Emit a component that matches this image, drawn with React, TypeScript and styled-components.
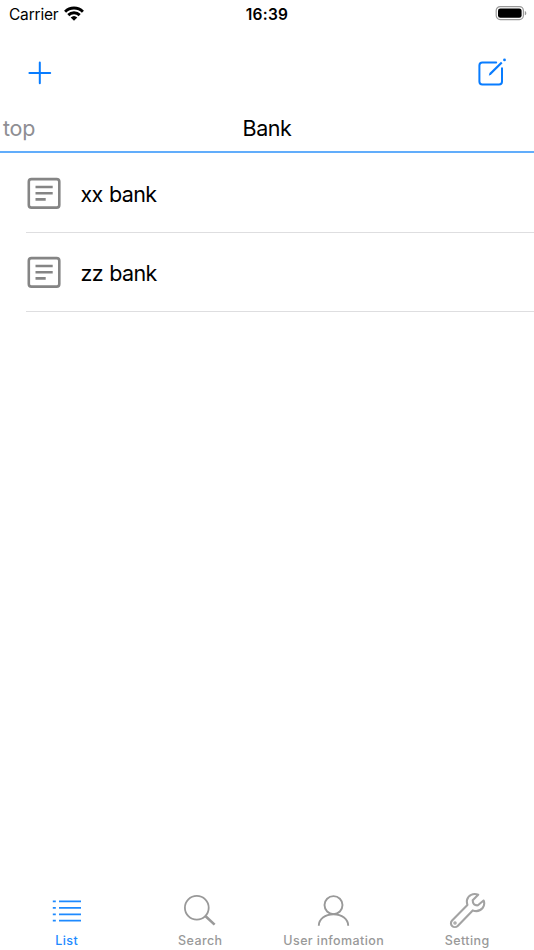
import React from "react";
import styled, { createGlobalStyle } from "styled-components";

const GlobalStyle = createGlobalStyle`
  * { box-sizing: border-box; }
  body { margin: 0; background: #fff; }
`;

const Screen = styled.div`
  width: 100%;
  height: 950px;
  display: flex;
  flex-direction: column;
  overflow: hidden;
  background: #fff;
  color: #000;
  font-family: Inter, "Liberation Sans", sans-serif;
  svg { display: block; flex: none; }
`;

const StatusBar = styled.header`
  height: 28px;
  flex: none;
  display: grid;
  grid-template-columns: 1fr auto 1fr;
  align-items: center;
  padding: 0 7px 0 9px;
`;

const Carrier = styled.div`
  display: flex;
  align-items: center;
  gap: 6px;
  padding-top: 1px;
  font-size: 15.5px;
  line-height: 20px;
  letter-spacing: -0.2px;
  svg { margin-bottom: 2px; }
`;

const Clock = styled.time`
  padding-top: 1px;
  margin-left: -2px;
  font-size: 15.5px;
  line-height: 20px;
  font-weight: 600;
  letter-spacing: 0.25px;
`;

const Battery = styled.div`
  display: flex;
  justify-content: flex-end;
  padding-bottom: 2px;
`;

const Toolbar = styled.nav`
  height: 77px;
  flex: none;
  display: flex;
  align-items: center;
  justify-content: space-between;
  padding: 12px 27px 0 26px;
`;

const IconButton = styled.button`
  padding: 0;
  border: 0;
  background: none;
  color: #087cff;
`;

const TitleBar = styled.div`
  height: 48px;
  flex: none;
  display: grid;
  grid-template-columns: 1fr auto 1fr;
  align-items: center;
  padding: 0 3px;
  border-bottom: 2px solid #61adfb;
  line-height: 28px;
`;

const Back = styled.span`
  color: #8e8e93;
  font-size: 21.5px;
  letter-spacing: -0.2px;
`;

const Title = styled.h1`
  margin: 0;
  font-size: 21.5px;
  font-weight: 400;
  letter-spacing: -0.4px;
`;

const List = styled.ul`
  flex: 1;
  margin: 0;
  padding: 1px 0 0 26px;
  list-style: none;
`;

const Row = styled.li`
  height: 79px;
  display: flex;
  align-items: center;
  gap: 18.5px;
  border-bottom: 1px solid #dedee0;
  font-size: 21.5px;
  line-height: 28px;
  letter-spacing: -0.65px;
  word-spacing: 1px;
`;

const RowLabel = styled.span`
  padding-top: 2px;
`;

const TabBar = styled.nav`
  height: 65px;
  flex: none;
  display: grid;
  grid-template-columns: repeat(4, 1fr);
`;

const Tab = styled.button<{ $active?: boolean }>`
  display: flex;
  flex-direction: column;
  align-items: center;
  padding: 5px 0 0;
  border: 0;
  background: none;
  color: ${(p) => (p.$active ? "#1e8aff" : "#999")};
  font-family: inherit;
  font-size: 12.5px;
  font-weight: 500;
  line-height: 16px;
  letter-spacing: 0.4px;
`;

const TabLabel = styled.span`
  margin-top: 3px;
  white-space: nowrap;
`;

const WifiIcon = () => (
  <svg width="20" height="16" viewBox="0 0 20 16" fill="none" stroke="#000" strokeWidth="2.9">
    <path d="M1.1 5.7a12.7 12.7 0 0 1 17.8 0M4.3 9.1a8.1 8.1 0 0 1 11.4 0" />
    <path d="M10 14.8 6.7 11.5a4.8 4.8 0 0 1 6.6 0Z" fill="#000" stroke="none" />
  </svg>
);

const BatteryIcon = () => (
  <svg width="32" height="16" viewBox="0 0 32 16">
    <rect x="1.2" y="1.6" width="27.2" height="13" rx="4" fill="none" stroke="#999" strokeWidth="1.2" />
    <rect x="3" y="3.4" width="23.6" height="9.4" rx="2.3" />
    <path d="M29.8 5.9c2 .7 2 3.7 0 4.4Z" fill="#999" />
  </svg>
);

const PlusIcon = () => (
  <svg width="28" height="28" viewBox="0 0 28 28" stroke="currentColor" strokeWidth="2">
    <path d="M13.8 3.5v20.8M3.4 13.9h20.8" strokeLinecap="round" />
  </svg>
);

const ComposeIcon = () => (
  <svg width="30" height="30" viewBox="0 0 30 30" fill="none" stroke="currentColor" strokeWidth="2" strokeLinecap="round">
    <path d="M19.2 4.6H5.4Q2.4 4.6 2.4 7.6v16q0 3 3 3H22q3 0 3-3V10.3" />
    <path d="m11.8 17.8.7-2.8L24 3.7l1.5 1.5-11.3 11.4Z" fill="currentColor" stroke="none" />
    <circle cx="27.5" cy="1.9" r="1.4" fill="currentColor" stroke="none" />
  </svg>
);

const DocumentIcon = () => (
  <svg width="36" height="34" viewBox="0 0 36 34" fill="none" stroke="#858585" strokeWidth="2.6">
    <rect x="2.8" y="3.1" width="30.5" height="28.5" rx="2.7" />
    <path d="M9.5 11h17.2M9.5 17.3h17.2M9.5 23.4h10.2" />
  </svg>
);

const ListIcon = () => (
  <svg width="36" height="40" viewBox="0 0 36 40" stroke="currentColor" strokeWidth="1.7">
    <path d="M3.8 11.3h3M10 11.3h22M3.8 17.8h3M10 17.8h22M3.8 24.3h3M10 24.3h22M3.8 30.7h3M10 30.7h22" />
  </svg>
);

const SearchIcon = () => (
  <svg width="36" height="40" viewBox="0 0 36 40" fill="none" stroke="currentColor">
    <circle cx="14.8" cy="17.7" r="11.9" strokeWidth="1.8" />
    <path d="m23.6 26.3 9 8.3" strokeWidth="2.6" />
  </svg>
);

const UserIcon = () => (
  <svg width="36" height="40" viewBox="0 0 36 40" fill="none" stroke="currentColor" strokeWidth="1.9">
    <circle cx="17.5" cy="15.1" r="9" />
    <path d="M2.8 35.8c0-6.4 6.2-11.6 14.7-11.6s14.7 5.2 14.7 11.6" />
  </svg>
);

const WrenchIcon = () => (
  <svg width="38" height="40" viewBox="0 0 38 40" fill="none" stroke="#a3a3a3" strokeWidth="2.1" strokeLinejoin="round">
    <path d="M30.2 4.8C25.2 2.6 20 5.5 19 10c-.4 2 0 3.5.4 4.9L4.1 30.4c-1.6 1.6-1.5 4.2 0 5.6s4 1.4 5.6-.1l15-15.5c4.1 1.4 7.6.4 9.9-2.4 1.8-2.3 2-5 1-7.5l-5.7 4.8c-3.5.3-5.2-1.3-5.2-5Z" />
    <circle cx="7" cy="33" r="1.1" strokeWidth="1.3" />
  </svg>
);

const banks = ["xx bank", "zz bank"];
const tabs = [
  { label: "List", Icon: ListIcon },
  { label: "Search", Icon: SearchIcon },
  { label: "User infomation", Icon: UserIcon },
  { label: "Setting", Icon: WrenchIcon },
];

export default function App() {
  return (
    <Screen>
      <GlobalStyle />
      <StatusBar>
        <Carrier>Carrier <WifiIcon /></Carrier>
        <Clock>16:39</Clock>
        <Battery><BatteryIcon /></Battery>
      </StatusBar>
      <Toolbar>
        <IconButton aria-label="Add"><PlusIcon /></IconButton>
        <IconButton aria-label="Edit"><ComposeIcon /></IconButton>
      </Toolbar>
      <TitleBar>
        <Back>top</Back>
        <Title>Bank</Title>
      </TitleBar>
      <List>
        {banks.map((bank) => (
          <Row key={bank}><DocumentIcon /><RowLabel>{bank}</RowLabel></Row>
        ))}
      </List>
      <TabBar>
        {tabs.map(({ label, Icon }, index) => (
          <Tab key={label} $active={index === 0}>
            <Icon />
            <TabLabel>{label}</TabLabel>
          </Tab>
        ))}
      </TabBar>
    </Screen>
  );
}
